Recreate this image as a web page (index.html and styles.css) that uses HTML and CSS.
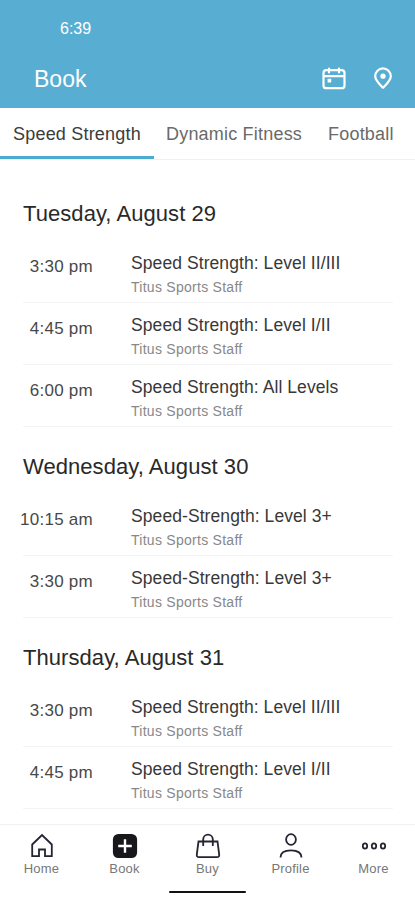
FILE: index.html
```html
<!DOCTYPE html>
<html lang="en">
<head>
<meta charset="utf-8">
<title>Book</title>
<link rel="stylesheet" href="styles.css">
</head>
<body>
<div class="app">
  <header class="header">
    <div class="clock">6:39</div>
    <div class="bar">
      <h1>Book</h1>
      <div class="actions">
        <svg width="24" height="24" viewBox="0 0 24 24" fill="none" stroke="currentColor" stroke-width="2.2" stroke-linecap="round"><rect x="1.500" y="3.200" width="21" height="18" rx="2.800"/><path d="M2 9.200h20M7 1.500v4M17 1.500v4"/><rect class="solid" x="5.600" y="11.800" width="3.600" height="3.600" rx=".5"/></svg>
        <svg width="24" height="24" viewBox="0 0 24 24" fill="none" stroke="currentColor" stroke-width="2.2" stroke-linejoin="round"><path d="M12 20.800C8.500 17.200 4.200 13.300 4.200 9.200a7.800 7.800 0 0 1 15.600 0c0 4.100-4.300 8-7.800 11.600Z"/><circle class="solid" cx="12" cy="9.200" r="2.600"/></svg>
      </div>
    </div>
  </header>
  <nav class="tabs">
    <span class="tab active">Speed Strength</span>
    <span class="tab dynamic">Dynamic Fitness</span>
    <span class="tab football">Football</span>
  </nav>
  <main class="schedule">
    <section>
      <h2>Tuesday, August 29</h2>
      <div class="row"><time>3:30 pm</time><div><h3>Speed Strength: Level II/III</h3><p>Titus Sports Staff</p></div></div>
      <div class="row"><time>4:45 pm</time><div><h3>Speed Strength: Level I/II</h3><p>Titus Sports Staff</p></div></div>
      <div class="row"><time>6:00 pm</time><div><h3>Speed Strength: All Levels</h3><p>Titus Sports Staff</p></div></div>
    </section>
    <section>
      <h2>Wednesday, August 30</h2>
      <div class="row"><time>10:15 am</time><div><h3>Speed-Strength: Level 3+</h3><p>Titus Sports Staff</p></div></div>
      <div class="row"><time>3:30 pm</time><div><h3>Speed-Strength: Level 3+</h3><p>Titus Sports Staff</p></div></div>
    </section>
    <section>
      <h2>Thursday, August 31</h2>
      <div class="row"><time>3:30 pm</time><div><h3>Speed Strength: Level II/III</h3><p>Titus Sports Staff</p></div></div>
      <div class="row"><time>4:45 pm</time><div><h3>Speed Strength: Level I/II</h3><p>Titus Sports Staff</p></div></div>
      <div class="row next"><div><h3>Speed Strength: All Levels</h3></div></div>
    </section>
  </main>
  <footer class="footer">
    <nav class="nav">
      <div class="item"><svg width="26" height="26" viewBox="0 0 26 26"><path d="M3.200 11.500 13 2l9.800 9.500v11.700h-6.800v-6.700h-6v6.700H3.200Z"/></svg><span>Home</span></div>
      <div class="item"><svg width="26" height="26" viewBox="0 0 26 26"><rect class="tile" x=".9" y=".9" width="24.200" height="24.200" rx="5.500"/><path class="plus" d="M13 6.200v13.600M6.200 13h13.600"/></svg><span>Book</span></div>
      <div class="item"><svg width="26" height="26" viewBox="0 0 26 26"><path d="M3.500 8.500h19l1.700 13.200q.2 2.400-2.200 2.400H4q-2.400 0-2.200-2.400ZM8.200 13V6.500a4.800 4.800 0 0 1 9.600 0V13"/></svg><span>Buy</span></div>
      <div class="item"><svg width="26" height="26" viewBox="0 0 26 26"><ellipse cx="13" cy="6.500" rx="4.900" ry="5.300"/><path d="M2.500 24.500c0-4.600 4.100-7.200 10.500-7.200s10.500 2.600 10.500 7.200"/></svg><span>Profile</span></div>
      <div class="item"><svg width="26" height="26" viewBox="0 0 26 26"><ellipse cx="4" cy="13" rx="2.200" ry="2.700"/><ellipse cx="13" cy="13" rx="2.200" ry="2.700"/><ellipse cx="22" cy="13" rx="2.200" ry="2.700"/></svg><span>More</span></div>
    </nav>
    <div class="home-indicator"></div>
  </footer>
</div>
</body>
</html>
```
FILE: styles.css
```css
* { box-sizing: border-box; margin: 0; padding: 0; }
body {
  background: #fff;
  color: #383838;
  font-family: "Liberation Sans", Arial, sans-serif;
}
h1, h2, h3 { font-weight: 400; }
.app {
  width: 415px;
  height: 900px;
  display: flex;
  flex-direction: column;
  overflow: hidden;
}
.header { flex: none; height: 108px; background: #57aed2; color: #fff; }
.clock { padding: 19px 0 0 60px; font-size: 16px; line-height: 20px; }
.bar {
  display: flex;
  justify-content: space-between;
  align-items: center;
  height: 40px;
  margin-top: 20px;
  padding: 0 20px 0 34px;
}
.bar h1 { font-size: 23px; line-height: 30px; }
.actions { display: flex; gap: 25px; }
.actions svg { display: block; }
.solid { fill: currentColor; stroke: none; }
.tabs {
  flex: none;
  display: flex;
  height: 52px;
  border-bottom: 1px solid #f0f0f0;
  font-size: 18px;
  line-height: 52px;
  letter-spacing: .200px;
  color: #6a6a6a;
  white-space: nowrap;
}
.tab { height: 51px; padding-left: 12px; }
.tab.active { width: 154px; padding-left: 13px; color: #3c3c3c; border-bottom: 3px solid #4eabd0; }
.football { padding-left: 26px; }
.schedule { flex: 1; min-height: 0; padding: 14px 22px 0 23px; overflow: hidden; }
h2 { height: 67px; font-size: 22px; line-height: 80px; letter-spacing: .060px; color: #292929; }
.row {
  display: flex;
  gap: 38px;
  height: 62px;
  border-bottom: 1px solid #f4f4f4;
}
.row.next { padding-left: 108px; }
time {
  flex: none;
  display: flex;
  justify-content: flex-end;
  width: 70px;
  padding-top: 16px;
  font-size: 17px;
  line-height: 20px;
  letter-spacing: .260px;
  white-space: nowrap;
  color: #484848;
}
h3 { padding-top: 12px; font-size: 17.500px; line-height: 20px; letter-spacing: .080px; }
.row p { padding-top: 6px; font-size: 14px; line-height: 16px; letter-spacing: .270px; color: #888; }
.footer { flex: none; height: 76px; background: #fff; border-top: 1px solid #f1f1f1; }
.nav { display: flex; height: 66px; padding-top: 8px; }
.item {
  flex: 1;
  display: flex;
  flex-direction: column;
  align-items: center;
  font-size: 13px;
  line-height: 16px;
  letter-spacing: .200px;
  color: #777;
}
.item svg { display: block; margin-bottom: 2px; fill: none; stroke: #242432; stroke-width: 1.800; }
.item .tile { fill: #17171c; stroke: none; }
.item .plus { stroke: #fff; stroke-width: 2.400; }
.home-indicator { width: 77px; height: 2px; margin: 0 auto; background: #111; border-radius: 1px; }
```
